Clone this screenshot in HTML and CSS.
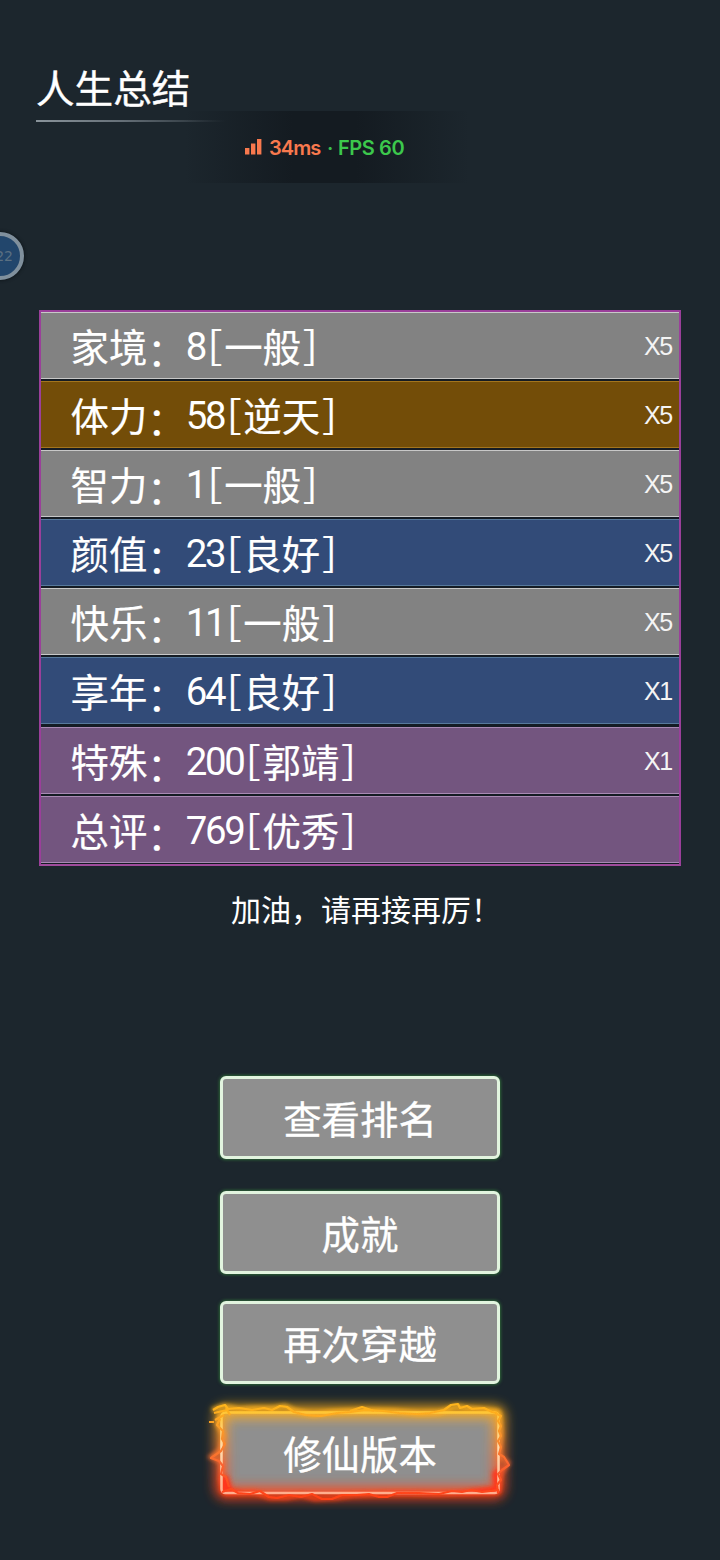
FILE: index.html
```html
<!DOCTYPE html>
<html lang="zh-CN">
<head>
<meta charset="utf-8">
<title>人生总结</title>
<link rel="stylesheet" href="styles.css">
</head>
<body>
<main class="screen">
  <h1 class="title">人生总结</h1>
  <div class="perf">
    <svg class="signal" width="18" height="17" viewBox="0 0 18 17"><path d="M0 10h4.400v6.400H0zM6 5.500h4.400v10.900H6zM12 1h4.400v15.400H12z" fill="#f8794e"/></svg>
    <span class="ping">34ms</span><span class="dot">·</span><span class="fps">FPS 60</span>
  </div>
  <div class="float-badge"><span>22</span></div>

  <section class="stats">
    <div class="row common"><span>家境<i class="colon">：</i><i class="num">8</i><i class="br">[</i>一般<i class="br">]</i></span><span class="mult">X5</span></div>
    <div class="row legend"><span>体力<i class="colon">：</i><i class="num">58</i><i class="br">[</i>逆天<i class="br">]</i></span><span class="mult">X5</span></div>
    <div class="row common"><span>智力<i class="colon">：</i><i class="num">1</i><i class="br">[</i>一般<i class="br">]</i></span><span class="mult">X5</span></div>
    <div class="row good"><span>颜值<i class="colon">：</i><i class="num">23</i><i class="br">[</i>良好<i class="br">]</i></span><span class="mult">X5</span></div>
    <div class="row common"><span>快乐<i class="colon">：</i><i class="num">11</i><i class="br">[</i>一般<i class="br">]</i></span><span class="mult">X5</span></div>
    <div class="row good"><span>享年<i class="colon">：</i><i class="num">64</i><i class="br">[</i>良好<i class="br">]</i></span><span class="mult">X1</span></div>
    <div class="row epic"><span>特殊<i class="colon">：</i><i class="num">200</i><i class="br">[</i>郭靖<i class="br">]</i></span><span class="mult">X1</span></div>
    <div class="row epic"><span>总评<i class="colon">：</i><i class="num">769</i><i class="br">[</i>优秀<i class="br">]</i></span></div>
  </section>

  <p class="cheer">加油，请再接再厉！</p>

  <nav class="actions">
    <button class="btn rank">查看排名</button>
    <button class="btn achieve">成就</button>
    <button class="btn again">再次穿越</button>
    <button class="btn fire">
      <svg class="flames" width="340" height="130" viewBox="0 0 340 130" fill="none">
        <defs>
          <linearGradient id="heat" gradientUnits="userSpaceOnUse" x1="0" y1="26" x2="0" y2="116">
            <stop offset="0" stop-color="#ffb51c"/><stop offset=".35" stop-color="#f9902c"/><stop offset=".65" stop-color="#fb6330"/><stop offset="1" stop-color="#ff4218"/>
          </linearGradient>
          <linearGradient id="rim" gradientUnits="userSpaceOnUse" x1="0" y1="30" x2="0" y2="114">
            <stop offset="0" stop-color="#ffc52d"/><stop offset=".45" stop-color="#ffdcae"/><stop offset="1" stop-color="#ffad8d"/>
          </linearGradient>
          <filter id="wide" x="-20%" y="-40%" width="140%" height="180%"><feGaussianBlur stdDeviation="6"/></filter>
          <filter id="tight" x="-20%" y="-40%" width="140%" height="180%"><feGaussianBlur stdDeviation="2.200"/></filter>
          <filter id="soft" x="-20%" y="-40%" width="140%" height="180%"><feGaussianBlur stdDeviation=".6"/></filter>
        </defs>
        <rect x="31" y="32" width="278" height="81" rx="4" stroke="url(#heat)" stroke-width="13" filter="url(#wide)" opacity=".85"/>
        <rect x="31" y="32" width="278" height="81" rx="4" stroke="url(#heat)" stroke-width="4" filter="url(#tight)" opacity=".6"/>
        <g stroke="url(#heat)" stroke-width="4" filter="url(#tight)">
          <path d="M22 30l12-4 15 3 16-1 18 0 12-2 11 5 17 4 20-3 31-2 30 1 25 3 20-1 17-7 10 2 14 1 20 3M31 32l-4 11 7 12-3 15-10 7 11 5-1 18 8 14M309 32l2 22-2 22 9 7-7 10-3 20M34 113l30-1 16 6 16 0 15-3 14 4 20-1 20-3 42-2 40 1 31-1 30-2"/>
        </g>
        <path d="M31 98l7-3 4 14 10 4H32zM302 93l7-6v26h-44l21-4 18-2z" fill="#ff351b" filter="url(#tight)"/>
        <rect x="31.500" y="32.500" width="277" height="80.500" rx="4" stroke="url(#rim)" stroke-width="2.500"/>
        <g stroke="url(#heat)" stroke-width="2.200" stroke-linejoin="round" filter="url(#soft)">
          <path d="M23 30l5-3 7-2 3 4 11-1 13 2 12-2 8 2 8-4 7 1 7 5 12 3 15 1 16-3 14-1 14-2 18 1 16 2 18 1 13-1 14-3 7-5 7-1 2 4 7-2 5 3 12-1 8 4 5 1"/>
          <path d="M24 33l13-3M25 40l9-5M19 42h5M36 28l4 7M30 39l-3 6 6 6-1 8 3 5-4 7-10 7 8 3 4 5-2 8 5 3 3 10"/>
          <path d="M305 33l6 3-3 5 3 5-2 5 2 5-3 5 3 6-2 7 5 3 5 8-7 5-4 4 3 6-4 5 1 8M160 31l12-4 12 4"/>
          <path d="M32 112l9-3 7 4 12 1 10-3 9 6 8 1 12-3 12 2 11-3 10 5 10 0 10-4 15 0 12-1 10 3 8 0 10-4 22 0 20 1 13-3 10 1 9-2 11 2 17-2"/>
        </g>
      </svg>
      <span>修仙版本</span>
    </button>
  </nav>
</main>
</body>
</html>
```
FILE: styles.css
```css
* { box-sizing: border-box; }
body {
  margin: 0;
  background: #1c262d;
  color: #fff;
  font-family: "Noto Sans CJK SC", "Liberation Sans", sans-serif;
}
.screen {
  position: relative;
  width: 720px;
  height: 1560px;
  overflow: hidden;
  padding-top: 62px;
  display: flex;
  flex-direction: column;
}
.title {
  margin: 0 0 0 36px;
  width: 190px;
  height: 60px;
  font-size: 38.6px;
  font-weight: 400;
  line-height: 48px;
  -webkit-text-stroke: .4px #fff;
  background: linear-gradient(90deg, #89939a, #667078 45%, transparent) left bottom / 100% 2px no-repeat;
}
.perf {
  position: absolute;
  left: 185px;
  top: 111px;
  width: 285px;
  height: 72px;
  padding: 2px 0 0 60px;
  display: flex;
  align-items: center;
  white-space: pre;
  font: 600 20px/24px Inter, sans-serif;
  background: linear-gradient(90deg, transparent, #141b21 38%, #141b21 60%, transparent);
}
.signal { margin-top: -4px; }
.ping { width: 58px; margin-left: 6px; color: #f8794e; letter-spacing: -.9px; }
.dot { width: 11px; color: #39bd4e; }
.fps { color: #3cc84c; letter-spacing: -.4px; }
.float-badge {
  position: absolute;
  left: -24px;
  top: 232px;
  width: 48px;
  height: 48px;
  border: 4px solid #80909d;
  border-radius: 50%;
  background: #22466c;
  box-shadow: 0 0 3px 1px #11191e;
  display: flex;
  align-items: center;
  justify-content: flex-end;
  padding-right: 7px;
  color: #5b7082;
  font: 14px/16px "DejaVu Sans", sans-serif;
}
.stats {
  flex: none;
  margin: 188px 39px 0;
  height: 556px;
  display: grid;
  grid-template-rows: repeat(8, 67px);
  gap: 2.1px;
  border: 2px solid #9a3f9a;
  border-bottom-color: #a04c9c;
  background: #151c24;
}
.row {
  display: flex;
  justify-content: space-between;
  padding: 0 6px 0 29.500px;
  border: solid;
  border-width: 1px 0;
  font-size: 38.4px;
  line-height: 65px;
  -webkit-text-stroke: .2px #fff;
  white-space: nowrap;
}
.row > span { height: 65px; }
.row i { font-style: normal; position: relative; }
.row .colon { top: 4px; }
.row .num {
  top: -2px;
  font-family: Roboto, sans-serif;
  line-height: 1;
  letter-spacing: -2.360px;
  -webkit-text-stroke: 0;
}
.row .br { top: -3px; font-feature-settings: "hwid"; }
.common { background: #828282; border-color: #c8c8c8; }
.legend { background: #734d08; border-color: #a3751d; }
.good { background: #324b78; border-color: #57799c; }
.epic { background: #73557f; border-color: #a88ab4; }
.mult {
  font: 25px/66px "Liberation Sans", sans-serif;
  letter-spacing: -1.500px;
  min-width: 29px;
  color: #f4f4f4;
  -webkit-text-stroke: 0;
}
.cheer {
  margin: 20px 0 0;
  padding-left: 231px;
  font-size: 30px;
  line-height: 44px;
}
.actions {
  margin-top: 146px;
  display: flex;
  flex-direction: column;
  align-items: center;
}
.btn {
  position: relative;
  width: 280px;
  height: 83px;
  padding: 0 0 1px;
  border: 3px solid #e2f4df;
  border-radius: 6px;
  background: #8f8f8f;
  box-shadow: 0 0 3px 1px #2d6537;
  color: #fff;
  font: 38.4px/48px "Noto Sans CJK SC", sans-serif;
  -webkit-text-stroke: .3px #fff;
}
.rank { margin-bottom: 32px; }
.achieve, .again { margin-bottom: 27px; }
.fire { border-color: transparent; box-shadow: none; }
.fire span { position: relative; }
.flames {
  position: absolute;
  left: -33px;
  top: -34px;
  pointer-events: none;
}
```
